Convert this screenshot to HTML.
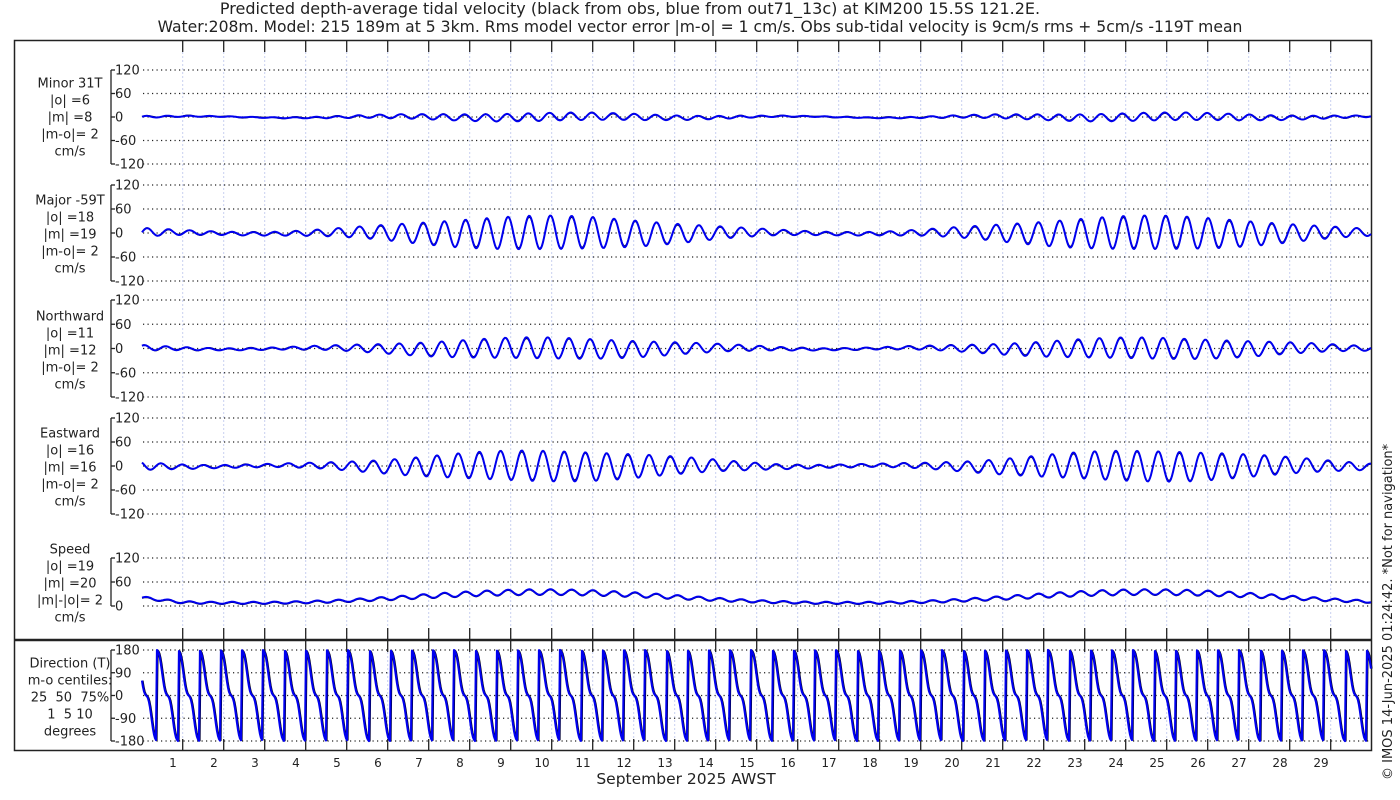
<!DOCTYPE html>
<html><head><meta charset="utf-8">
<style>
html,body{margin:0;padding:0;background:#fff;}
body{width:1400px;height:800px;overflow:hidden;position:relative;font-family:"DejaVu Sans","Liberation Sans",sans-serif;}
svg{position:absolute;left:0;top:0;}
text{font-family:"DejaVu Sans","Liberation Sans",sans-serif;fill:#222;white-space:pre;}
</style></head><body>
<svg id="s" width="1400" height="800" viewBox="0 0 1400 800" xmlns="http://www.w3.org/2000/svg">
<text x="630" y="14" font-size="16" text-anchor="middle">Predicted depth-average tidal velocity (black from obs, blue from out71_13c) at KIM200 15.5S 121.2E.</text>
<text x="700" y="32" font-size="15.6" text-anchor="middle">Water:208m. Model: 215 189m at 5 3km. Rms model vector error |m-o| = 1 cm/s. Obs sub-tidal velocity is 9cm/s rms + 5cm/s -119T mean</text>
<text x="686" y="784" font-size="15.5" text-anchor="middle">September 2025 AWST</text>
<text transform="translate(1392,780) rotate(-90)" font-size="13">© IMOS 14-Jun-2025 01:24:42. *Not for navigation*</text>
<g id="g"></g>
</svg>
<script>
var NS="http://www.w3.org/2000/svg",g=document.getElementById('g');
function el(t,a,txt){var e=document.createElementNS(NS,t);for(var k in a)e.setAttribute(k,a[k]);if(txt!==undefined)e.textContent=txt;g.appendChild(e);return e;}
var X0=142,X1=1371;
var ticks=[];for(var k=0;k<29;k++)ticks.push(182.7+41*k);
ticks.forEach(function(x,i){
 el('line',{x1:x,y1:52,x2:x,y2:739,stroke:'#c8d0f0','stroke-width':1,'stroke-dasharray':'2,2'});
 el('line',{x1:x,y1:40,x2:x,y2:52,stroke:'#222','stroke-width':1.3});
 el('line',{x1:x,y1:628,x2:x,y2:640,stroke:'#222','stroke-width':1.3});
 el('line',{x1:x,y1:640,x2:x,y2:652,stroke:'#222','stroke-width':1.3});
 el('line',{x1:x,y1:739,x2:x,y2:751,stroke:'#222','stroke-width':1.3});
 el('text',{x:173+41*i,y:767,'font-size':12,'text-anchor':'middle'},String(i+1));
});
var P=[
 {top:70,bot:164,vals:[120,60,0,-60,-120],max:120,min:-120,lab:['Minor 31T','|o| =6','|m| =8','|m-o|= 2','cm/s'],ly:83},
 {top:185,bot:281,vals:[120,60,0,-60,-120],max:120,min:-120,lab:['Major -59T','|o| =18','|m| =19','|m-o|= 2','cm/s'],ly:200},
 {top:300,bot:397,vals:[120,60,0,-60,-120],max:120,min:-120,lab:['Northward','|o| =11','|m| =12','|m-o|= 2','cm/s'],ly:316},
 {top:418,bot:514,vals:[120,60,0,-60,-120],max:120,min:-120,lab:['Eastward','|o| =16','|m| =16','|m-o|= 2','cm/s'],ly:433},
 {top:558,bot:606,vals:[120,60,0],max:120,min:0,lab:['Speed','|o| =19','|m| =20','|m|-|o|= 2','cm/s'],ly:549},
 {top:650,bot:741,vals:[180,90,0,-90,-180],max:180,min:-180,lab:['Direction (T)','m-o centiles:','25  50  75%','1  5 10','degrees'],ly:663}
];
P.forEach(function(p){
 function Y(v){return p.top+(p.max-v)/(p.max-p.min)*(p.bot-p.top);}
 p.Y=Y;
 el('line',{x1:111,y1:p.top,x2:111,y2:p.bot,stroke:'#222','stroke-width':1.3});
 p.vals.forEach(function(v){var y=Y(v);
  el('line',{x1:111,y1:y,x2:115,y2:y,stroke:'#222','stroke-width':1.3});
  el('line',{x1:143,y1:y,x2:X1,y2:y,stroke:'#222','stroke-width':1.2,'stroke-dasharray':'1.2,3.3'});
  el('text',{x:115,y:y+4.5,'font-size':13},String(v));
 });
 p.lab.forEach(function(t,i){el('text',{x:70,y:p.ly+i*17+4.5,'font-size':13,'text-anchor':'middle'},t);});
});
el('rect',{x:14.5,y:40.5,width:1357,height:710,fill:'none',stroke:'#222','stroke-width':1.5});
el('line',{x1:14,y1:640,x2:1372,y2:640,stroke:'#222','stroke-width':2.5});
function env(t){return 0.1+0.9*Math.pow(0.5+0.5*Math.cos(2*Math.PI*(t-9.8)/14.77),1.2);}
var W=2*Math.PI/0.5175;
function tx(x){return (x-X0)/41;}
function poly(pts,col,w){el('polyline',{points:pts.join(' '),fill:'none',stroke:col,'stroke-width':w,'stroke-linejoin':'round'});}
var amps=[10,42,26,38];var ph=[0.3,0,0.8,2.2];
for(var i=0;i<4;i++){
 var p=P[i],b=[],k=[];
 for(var x=X0;x<=X1;x+=1){var t=tx(x);
  var v=amps[i]*env(t)*Math.sin(W*t+ph[i])+2*Math.sin(t*1.3+i);
  var vo=v*0.95+1.5*Math.sin(t*7+i);
  b.push(x+','+p.Y(v).toFixed(1));k.push(x+','+p.Y(vo).toFixed(1));}
 poly(k,'#000',1.2);poly(b,'#0000ee',2);
}
(function(){var p=P[4],b=[],k=[];
 for(var x=X0;x<=X1;x+=1){var t=tx(x);var e=env(t);
  var v=5+30*e+(2+5*e)*Math.sin(W*t)+(t<1?8*(1-t):0);
  b.push(x+','+p.Y(v).toFixed(1));k.push(x+','+p.Y(v-1.5).toFixed(1));}
 poly(k,'#000',1.2);poly(b,'#0000ee',2);})();
(function(){var p=P[5],b=[],k=[];var per=0.5175*41;
 for(var x=X0;x<=X1;x+=1){var ph=((x-X0)/per+0.3)%1;
  var v=180-360*ph+22*Math.sin(2*Math.PI*ph*2);
  v=Math.max(-180,Math.min(180,v));
  b.push(x+','+p.Y(v).toFixed(1));k.push((x+1)+','+p.Y(v).toFixed(1));}
 poly(k,'#000',1.2);poly(b,'#0000ee',2.2);})();
</script>
</body></html>
